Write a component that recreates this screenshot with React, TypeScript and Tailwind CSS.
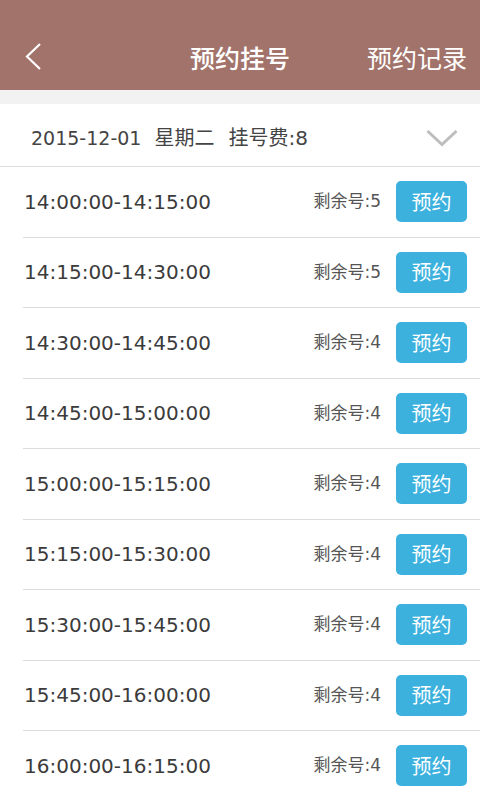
import React from "react";

const slots = [
  ["14:00:00-14:15:00", 5],
  ["14:15:00-14:30:00", 5],
  ["14:30:00-14:45:00", 4],
  ["14:45:00-15:00:00", 4],
  ["15:00:00-15:15:00", 4],
  ["15:15:00-15:30:00", 4],
  ["15:30:00-15:45:00", 4],
  ["15:45:00-16:00:00", 4],
  ["16:00:00-16:15:00", 4],
] as const;

const font = { fontFamily: '"DejaVu Sans", "Noto Sans CJK SC", sans-serif' };
const cjk = { fontFamily: '"Noto Sans CJK SC", sans-serif' };

export default function App() {
  return (
    <div className="w-[480px] h-[800px] overflow-hidden bg-white" style={font}>
      <div className="h-[90px] bg-[#a2736b] pt-[30px] flex items-center relative text-white">
        <svg className="absolute left-[24px] top-[42px]" width="20" height="30" viewBox="0 0 20 30">
          <path d="M16 2 L3 14.5 L16 27" fill="none" stroke="white" strokeWidth="2.2" />
        </svg>
        <div className="absolute left-0 right-0 top-[28px] h-[60px] flex items-center justify-center text-[25px] font-medium" style={cjk}>
          预约挂号
        </div>
        <div className="ml-auto pr-[13px] text-[25px] -mt-[4px]" style={cjk}>
          预约记录
        </div>
      </div>
      <div className="h-[14px] bg-[#f2f2f2]" />
      <div className="h-[63px] border-b border-[#dcdcdc] flex items-center pl-[31px] pr-[22px] pt-[6px] text-[#444] text-[19px]">
        <span>2015-12-01</span>
        <span className="ml-[13px] text-[20px]">星期二</span>
        <span className="ml-[14px] text-[20px]">挂号费:8</span>
        <svg className="ml-auto" width="32" height="18" viewBox="0 0 32 18">
          <path d="M1.5 2 L16 15.5 L30.5 2" fill="none" stroke="#bdbdbd" strokeWidth="3" />
        </svg>
      </div>
      {slots.map(([t, n]) => (
        <div key={t} className="ml-[23px] h-[70.5px] border-b border-[#dcdcdc] flex items-center pl-[1px] pr-[13px]">
          <span className="text-[20px] text-[#3b3b3b]">{t}</span>
          <span className="ml-auto text-[17px] text-[#555]">剩余号:{n}</span>
          <button className="ml-[15px] w-[71px] h-[41px] rounded-[5px] bg-[#3cb1de] text-white text-[20px] flex items-center justify-center" style={cjk}>
            预约
          </button>
        </div>
      ))}
    </div>
  );
}
